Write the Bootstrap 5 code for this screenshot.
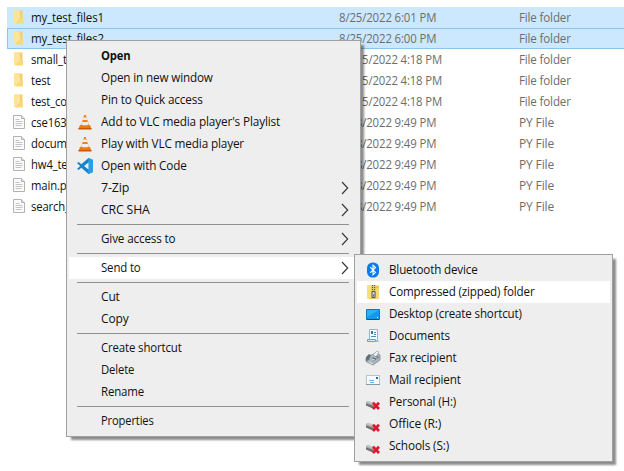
<!DOCTYPE html>
<html lang="en">
<head>
<meta charset="utf-8">
<title>File Explorer</title>
<meta name="viewport" content="width=device-width, initial-scale=1">
<link rel="stylesheet" href="https://cdn.jsdelivr.net/npm/bootstrap@5.3.0/dist/css/bootstrap.min.css">
<style>
body{width:624px;height:471px;font:12px/22px "Open Sans","Noto Sans",sans-serif;letter-spacing:-.15px;color:#111;background:#fff}
.file-list{padding:7px 0 0 7px}
.file-row{height:21px;line-height:20px;padding-left:4px;border:1px solid transparent;color:#6d6d6d}
.file-row.picked{background:#cce8ff}
.file-row.focused{border-color:#8fc4e9;border-right:0}
.f-icon{width:19px;line-height:0;padding-top:1px}
.f-name{width:308px;color:#111}
.f-date{width:180px}
.ctx{position:absolute;background:#eee;border:1px solid #a0a0a0;border-radius:0;padding:4px 2px;min-width:0;box-shadow:4px 4px 2px -1px rgba(0,0,0,.45)}
.ctx-main{left:66px;top:40px;width:295px;height:397px}
.ctx-sub{left:354px;top:254px;width:259px;height:208px}
.ctx-item{height:22px;padding:0;color:#111;background:transparent;line-height:22px;font-size:12px}
.ctx-item.hot,.ctx-item:hover{background:#fff;color:#111}
.ctx-icon{width:32px;padding-left:8px;display:flex;align-items:center;height:22px}
.ctx-rule{height:1px;margin:3px 9px 3px 8px;background:#919191}
.arrow{margin-left:auto;margin-right:9px}
svg{display:block;flex:none}
.fit{display:inline-block;transform-origin:0 50%}
</style>
<script src="https://cdn.jsdelivr.net/npm/bootstrap@5.3.0/dist/js/bootstrap.bundle.min.js"></script>
</head>
<body class="position-relative overflow-hidden m-0">
<svg width="0" height="0" class="position-absolute">
<symbol id="folder" viewBox="0 0 16 16"><path fill="#f3cf6b" d="M2 1.500h8.500V14H2z"/><path fill="#ffe39a" d="M2 1.500h5.500l1 8.500L4 14H2z"/><path fill="#f9d978" d="M8 9h3v5.500H3z"/></symbol>
<symbol id="file" viewBox="0 0 16 16"><path fill="#fbfbfb" stroke="#b3b3b3" d="M1.500 1.500h8l3 3v10h-11z"/><path fill="#e4e4e4" stroke="#b3b3b3" d="M9.500 1.500v3h3"/><path stroke="#c4c4c4" d="M3.500 5.500h4M3.500 7.500h7M3.500 9.500h7M3.500 11.500h6"/></symbol>
<symbol id="cone" viewBox="0 0 16 16"><path fill="#e87a12" d="M3 11h10l1.500 4H1.500z"/><path fill="#c95805" d="M1.500 14h13v1.500h-13z"/><path fill="#ef8318" d="M7.200 1h1.600L12 11.500q-4 2-8 0z"/><path fill="#eee" d="M6.500 3.500h3l.8 2.500H5.700zM5.100 8h5.800l.7 2.500q-3.600 1.700-7.200 0z"/></symbol>
<symbol id="code" viewBox="0 0 16 16"><path fill="#1684ca" d="M11.500 0 16 2v12l-4.500 2L4.300 9.800 1.700 12 0 11l3.200-3L0 5l1.700-1 2.600 2.200z"/><path fill="#27a0ea" d="m11.500 0 4.500 2v12l-4.500 2z"/><path fill="#eee" d="M11.500 4.500v7L7 8z"/></symbol>
<symbol id="chev" viewBox="0 0 8 14"><path d="m1 1 5.700 6L1 13" fill="none" stroke="#333" stroke-width="1.100"/></symbol>
<symbol id="bt" viewBox="0 0 16 16"><rect x="2" y=".5" width="12" height="15" rx="5.500" fill="#0a7bf2"/><path d="m5.200 5.200 5.300 5.300-2.500 2.300V3.200l2.500 2.300-5.300 5.300" fill="none" stroke="#fff" stroke-width="1.100"/></symbol>
<symbol id="zip" viewBox="0 0 16 16"><path fill="#e8c455" d="M2 1.500h12V15H2z"/><path fill="#f8dd83" d="M2 1.500h4l1 11L4 15H2z"/><path fill="#f5d878" d="M10.500 4.500H14V15h-3.500z"/><path stroke="#615c49" stroke-width="3.200" stroke-dasharray="1 1" d="M8.500 1v8"/><path stroke="#c8c8bc" d="M8.500 1v6"/><path fill="#dcdcd2" stroke="#4b4b4b" stroke-width=".9" d="M7 7.500h3v6H7z"/><path fill="#666" d="M8 10.500h1v2H8z"/></symbol>
<symbol id="desk" viewBox="0 0 16 16"><path fill="#1499ed" stroke="#1477b7" d="M1.500 3.500h13v10h-13z"/><path fill="#2bb1fa" d="M2 4h12L2 11z"/><path stroke="#0b4f83" d="M2 13.500h12"/><path fill="#fff" d="M12 11h1v1h-1z"/></symbol>
<symbol id="doc" viewBox="0 0 16 16"><path fill="#fafdff" stroke="#8bb6cd" d="M4.500 1.500h8v11h-8z"/><path fill="#297eae" d="M6 3h2v3H6z"/><path stroke="#488eb1" d="M9 4.500h2M9 6.500h2M6 8.500h5"/><path fill="#d5eaf4" stroke="#6ba2bf" d="M2.500 11.500h8v2h-8z"/><path stroke="#9ac4dc" d="M11 13.500h3"/></symbol>
<symbol id="fax" viewBox="0 0 16 16"><path fill="#a9b6bd" stroke="#73808a" stroke-width=".7" d="m5 6 6-3.500L15 5v5l-7 5-7-3.500V8z"/><path fill="#eef3f5" stroke="#8b969d" stroke-width=".6" d="m8 5 4-4 2 1-3 5z"/><path fill="#64717a" d="m1 7 3-3 2 1-2 5-3 1zM7 8l4-2 3 1-5 4z"/><path stroke="#eee" stroke-width=".8" d="m7 9 3 1M9 7l3 1M4 12l4 2"/></symbol>
<symbol id="mail" viewBox="0 0 16 16"><path fill="#f8fbfd" stroke="#b2c3cd" d="M1.500 3.500h13v9h-13z"/><path stroke="#79b3da" d="M4 8.500h5M5 10.500h4"/><path fill="#3265a8" d="M11 5h2v2h-2z"/><path stroke="#899aa4" d="M1 12.500h14"/></symbol>
<symbol id="drive" viewBox="0 0 16 16"><path fill="#aaa" d="m1 8 2-1 6 2v5l-1 .5L1 11z"/><path fill="#707070" d="m1 9.500 7 2.300v2.700l-7-3z"/><path fill="#c8c8c8" d="m1 8 2-1 6 2-1.500 1.500z"/><path d="m8 8.700 6 6.300m0-6.300L8 15" stroke="#dd1830" stroke-width="2.700"/></symbol>
</svg>

<main class="file-list" id="files"></main>

<div class="ctx ctx-main" id="mainMenu"></div>
<div class="ctx ctx-sub" id="subMenu"></div>

<script>
const use = (id, w = 16, h = 16, cls = '') => `<svg width="${w}" height="${h}" class="${cls}"><use href="#${id}"/></svg>`;
const txt = (s, w) => `<span class="fit text-nowrap" data-w="${w || ''}">${s}</span>`;
const files = [
  ['my_test_files1', 73, '8/25/2022 6:01 PM'], ['my_test_files2', 73, '8/25/2022 6:00 PM'],
  ['small_test', 0, '11/15/2022 4:18 PM', 103], ['test', 19, '11/15/2022 4:18 PM', 103], ['test_code', 0, '11/15/2022 4:18 PM', 103],
  ['cse163.py', 0, '11/8/2022 9:49 PM'], ['document.py', 0, '11/8/2022 9:49 PM'], ['hw4_test.py', 0, '11/8/2022 9:49 PM'],
  ['main.py', 0, '11/8/2022 9:49 PM'], ['search_.py', 0, '11/8/2022 9:49 PM']
];
document.getElementById('files').innerHTML = files.map((f, i) => {
  const dir = i < 5;
  return `<div class="file-row d-flex ${i < 2 ? 'picked' : ''} ${i === 1 ? 'focused' : ''}">
    <span class="f-icon">${use(dir ? 'folder' : 'file')}</span><span class="f-name">${txt(f[0], f[1])}</span>
    <span class="f-date">${txt(f[2], f[3] || 97)}</span><span>${dir ? txt('File folder', 52) : txt('PY File', 35)}</span></div>`;
}).join('');
const main = [
  ['<b>Open</b>', 30], ['Open in new window', 112], ['Pin to Quick access', 102],
  ["Add to VLC media player's Playlist", 179, 'cone'], ['Play with VLC media player', 143, 'cone'], ['Open with Code', 86, 'code'],
  ['7-Zip', 28, '', 1], ['CRC SHA', 49, '', 1], 0, ['Give access to', 74, '', 1], 0, ['Send to', 40, '', 1, 1], 0,
  ['Cut', 19], ['Copy', 28], 0, ['Create shortcut', 81], ['Delete', 33], ['Rename', 43], 0, ['Properties', 53]
];
const sub = [
  ['Bluetooth device', 89, 'bt'], ['Compressed (zipped) folder', 146, 'zip', 0, 1], ['Desktop (create shortcut)', 133, 'desk'],
  ['Documents', 61, 'doc'], ['Fax recipient', 67, 'fax'], ['Mail recipient', 72, 'mail'],
  ['Personal (H:)', 67, 'drive'], ['Office (R:)', 52, 'drive'], ['Schools (S:)', 60, 'drive']
];
const menu = items => items.map(m => m ? `<div class="ctx-item dropdown-item d-flex align-items-center ${m[4] ? 'hot' : ''}">
  <span class="ctx-icon">${m[2] ? use(m[2]) : ''}</span>${txt(m[0], m[1])}${m[3] ? use('chev', 8, 14, 'arrow') : ''}</div>` : '<div class="ctx-rule"></div>').join('');
document.getElementById('mainMenu').innerHTML = menu(main);
document.getElementById('subMenu').innerHTML = menu(sub);
document.querySelectorAll('.fit').forEach(e => {
  const w = +e.dataset.w || e.offsetWidth * .94;
  e.style.transform = `scaleX(${w / e.offsetWidth})`;
});
</script>
</body>
</html>
